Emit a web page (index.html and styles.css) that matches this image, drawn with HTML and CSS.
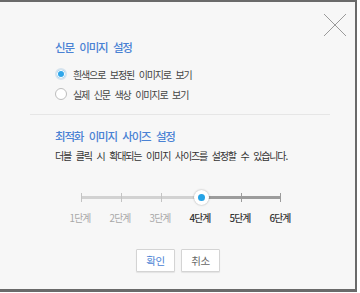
FILE: index.html
```html
<!DOCTYPE html>
<html lang="ko">
<head>
<meta charset="utf-8">
<link rel="stylesheet" href="styles.css">
</head>
<body>
<div class="dialog">
  <button class="close" aria-label="닫기">
    <svg width="24" height="24" viewBox="0 0 24 24"><path d="M1 1L23 23M23 1L1 23" stroke="#9a9a9a" stroke-width="1" fill="none"/></svg>
  </button>
  <section class="sec sec1">
    <h2 class="title">신문 이미지 설정</h2>
    <label class="radio-row"><span class="radio on"></span>흰색으로 보정된 이미지로 보기</label>
    <label class="radio-row"><span class="radio"></span>실제 신문 색상 이미지로 보기</label>
  </section>
  <hr class="divider">
  <section class="sec sec2">
    <h2 class="title">최적화 이미지 사이즈 설정</h2>
    <p class="desc">더블 클릭 시 확대되는 이미지 사이즈를 설정할 수 있습니다.</p>
  </section>
  <div class="slider">
    <div class="track">
      <div class="fill-left"></div>
      <div class="fill-right"></div>
      <span class="tick t1"></span><span class="tick t2"></span><span class="tick t3"></span><span class="tick t5"></span><span class="tick t6"></span>
      <span class="knob"></span>
    </div>
  </div>
  <div class="labels">
    <span class="lbl dim">1단계</span>
    <span class="lbl dim">2단계</span>
    <span class="lbl dim">3단계</span>
    <span class="lbl">4단계</span>
    <span class="lbl">5단계</span>
    <span class="lbl">6단계</span>
  </div>
  <div class="buttons">
    <button class="btn ok">확인</button>
    <button class="btn">취소</button>
  </div>
</div>
</body>
</html>
```
FILE: styles.css
```css
* { box-sizing: border-box; }
html, body { margin: 0; padding: 0; background: #ffffff; }
body { font-family: "Noto Sans CJK KR", "Noto Sans", sans-serif; color: #333; }

.dialog {
  position: relative;
  width: 357px;
  height: 292px;
  background: #f7f7f7;
  border-top: 2px solid #6a6a6a;
  border-right: 2px solid #6a6a6a;
  border-bottom: 3px solid #6a6a6a;
  padding-top: 35px;
}

.close {
  position: absolute;
  top: 11px;
  right: 8px;
  width: 24px;
  height: 24px;
  padding: 0;
  border: 0;
  background: none;
}
.close svg { display: block; }

.sec { padding-left: 55px; }
.title {
  margin: 0;
  font-size: 11.5px;
  line-height: 20px;
  font-weight: 500;
  color: #4a82d4;
  letter-spacing: -1.2px;
  word-spacing: 3.5px;
}
.sec1 .title { margin-bottom: 7px; }

.radio-row {
  display: flex;
  align-items: center;
  gap: 6px;
  height: 20px;
  font-size: 10px;
  color: #444;
  letter-spacing: -1.15px;
  word-spacing: 3px;
}
.radio {
  width: 12px;
  height: 12px;
  border-radius: 50%;
  border: 1px solid #bdbdbd;
  background: #fff;
  flex: none;
}
.radio.on {
  border: 2px solid #d5e3ee;
  background: #2fa6ea;
  box-shadow: inset 0 0 0 1px #fff;
}

.divider {
  margin: 10px 0 0 30px;
  width: 300px;
  height: 1px;
  border: 0;
  background: #e6e6e6;
}

.sec2 { padding-top: 11px; }
.desc {
  margin: 0;
  font-size: 10px;
  line-height: 20px;
  color: #333;
  letter-spacing: -1.15px;
  word-spacing: 3px;
}

.slider {
  margin-top: 24px;
  padding-left: 81px;
  height: 14px;
  display: flex;
  align-items: center;
}
.track {
  position: relative;
  width: 200px;
  height: 3px;
}
.fill-left { position: absolute; left: 0; top: 0; width: 120px; height: 3px; background: #d2d2d2; }
.fill-right { position: absolute; left: 120px; top: 0; width: 80px; height: 3px; background: #9c9c9c; }
.tick { position: absolute; top: -3px; width: 1px; height: 9px; background: #c4c4c4; }
.t1 { left: 0; }
.t2 { left: 40px; }
.t3 { left: 80px; }
.t5 { left: 160px; background: #9c9c9c; }
.t6 { left: 199px; background: #9c9c9c; }
.knob {
  position: absolute;
  left: 113px;
  top: -6px;
  width: 15px;
  height: 15px;
  border-radius: 50%;
  background: #fff;
  box-shadow: 0 0 2px rgba(0,0,0,0.35);
}
.knob::after {
  content: "";
  position: absolute;
  left: 4px;
  top: 4px;
  width: 7px;
  height: 7px;
  border-radius: 50%;
  background: #25a3e6;
}

.labels {
  margin-top: 7px;
  margin-left: 60px;
  display: grid;
  grid-template-columns: repeat(6, 40px);
  font-size: 9.8px;
  line-height: 14px;
  letter-spacing: -0.9px;
}
.lbl { text-align: center; color: #333; font-weight: 500; }
.lbl.dim { color: #a8a8a8; font-weight: 400; }

.buttons {
  margin-top: 24px;
  display: flex;
  justify-content: center;
  gap: 6px;
  padding-left: 1px;
}
.btn {
  width: 39px;
  height: 23px;
  padding: 0;
  background: #fff;
  border: 1px solid #d4d4d4;
  border-radius: 1px;
  box-shadow: 0 1px 1px rgba(0,0,0,0.08);
  font-family: inherit;
  font-size: 10.5px;
  letter-spacing: -0.5px;
  color: #666;
}
.btn.ok { color: #4a82d4; }
```
